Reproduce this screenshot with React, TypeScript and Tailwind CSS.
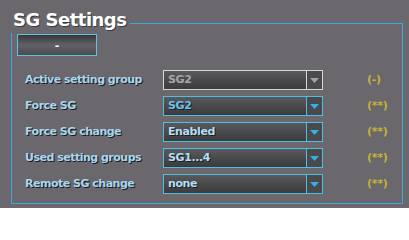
import React from "react";

type Row = { label: string; value: string; hint: string; disabled?: boolean; focused?: boolean };

const ROWS: Row[] = [
  { label: "Active setting group", value: "SG2", hint: "(-)", disabled: true },
  { label: "Force SG", value: "SG2", hint: "(**)", focused: true },
  { label: "Force SG change", value: "Enabled", hint: "(**)" },
  { label: "Used setting groups", value: "SG1...4", hint: "(**)" },
  { label: "Remote SG change", value: "none", hint: "(**)" },
];

const FONT = { fontFamily: '"DejaVu Sans", Verdana, sans-serif' };

function Arrow({ disabled }: { disabled?: boolean }) {
  return (
    <svg width="9" height="5" viewBox="0 0 9 5">
      <polygon points="0,0 9,0 4.5,5" fill={disabled ? "#a2a2a4" : "#35b0e4"} />
    </svg>
  );
}

function Select({ value, disabled, focused }: { value: string; disabled?: boolean; focused?: boolean }) {
  const text = disabled
    ? "text-[#a6a6a8]"
    : focused
      ? "text-[#66c4ee] [text-shadow:1px_1px_0_#1e1e20]"
      : "text-[#b4def2] [text-shadow:1px_1px_0_#1e1e20]";
  return (
    <div
      className={
        "flex h-[20px] w-[160px] border " +
        (disabled ? "border-[#d6d6d6]" : "border-[#4cc0e4]")
      }
    >
      <div
        className={
          "flex flex-1 items-center pl-[4px] text-[11px] font-bold tracking-[-0.4px] bg-gradient-to-b from-[#5a595c] to-[#3b3a3d] " +
          text
        }
      >
        {value}
      </div>
      <div
        className={
          "flex w-[16px] items-center justify-center border-l bg-[#4a494c] " +
          (disabled ? "border-[#d6d6d6]" : "border-[#4cc0e4]")
        }
      >
        <Arrow disabled={disabled} />
      </div>
    </div>
  );
}

export default function App() {
  return (
    <div className="relative h-[208px] w-[409px] overflow-hidden bg-[#6a686c] pt-[23px]" style={FONT}>
      <div className="ml-[11px] h-[181px] w-[392px] border border-[#3aa8d8] pl-[5px] pt-[10px]">
        <button className="flex h-[22px] w-[80px] items-center justify-center border border-[#5cc4dc] bg-gradient-to-b from-[#38373b] via-[#626165] to-[#4c4b4f] text-[11px] font-bold leading-none text-white">
          -
        </button>
        <div className="mt-[14px] flex flex-col gap-[6px] pl-[8px]">
          {ROWS.map((r) => (
            <div key={r.label} className="flex h-[20px] items-center">
              <div className="w-[138px] text-[11px] font-bold tracking-[-0.5px] text-[#a9d6ee] [text-shadow:1px_1px_0_#1a1a1c]">
                {r.label}
              </div>
              <Select value={r.value} disabled={r.disabled} focused={r.focused} />
              <div className="ml-[44px] text-[11px] font-bold tracking-[-0.3px] text-[#c6b238]">{r.hint}</div>
            </div>
          ))}
        </div>
      </div>
      <div className="absolute left-[8px] top-[6px] h-[27px] bg-[#6a686c] pl-[5px] pr-[4px] text-[18px] font-bold leading-[27px] tracking-[-0.5px] text-white [text-shadow:1px_1px_0_#3a3a3c]">
        SG Settings
      </div>
    </div>
  );
}
